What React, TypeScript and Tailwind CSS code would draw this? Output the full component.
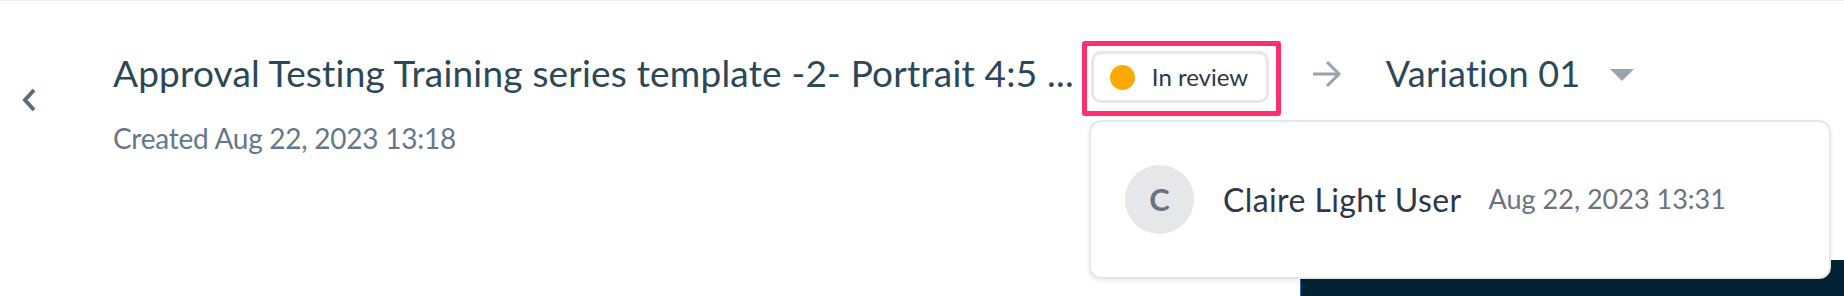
import React from 'react';

const font = { fontFamily: 'Lato, "Open Sans", sans-serif' };

function ChevronLeft() {
  return (
    <svg width="16" height="24" viewBox="0 0 16 24" fill="none">
      <path d="M13 2 L4 12 L13 22" stroke="#5f6b7a" strokeWidth="4" strokeLinecap="butt" strokeLinejoin="miter" />
    </svg>
  );
}

function ArrowRight() {
  return (
    <svg width="30" height="28" viewBox="0 0 30 28" fill="none">
      <path d="M1 14 H27 M15 2 L27 14 L15 26" stroke="#9aa3ad" strokeWidth="3" />
    </svg>
  );
}

function Caret() {
  return (
    <svg width="24" height="12" viewBox="0 0 24 12">
      <path d="M0 0 H24 L12 12 Z" fill="#9aa3ad" />
    </svg>
  );
}

export default function App() {
  return (
    <div className="relative w-full h-[296px] bg-white overflow-hidden border-t border-[#f1f1f1]" style={font}>
      <div className="flex items-start h-[259px]">
        <div className="ml-[21px] mt-[87px] w-[16px]">
          <ChevronLeft />
        </div>

        <div className="ml-[76px] mt-[50px] flex flex-col">
          <h1 className="text-[37px] leading-[44px] text-[#2c4858] whitespace-nowrap tracking-[0.2px]">
            Approval Testing Training series template -2- Portrait 4:5 ...
          </h1>
          <p className="mt-[25px] text-[28px] leading-[36px] text-[#66778a] whitespace-nowrap tracking-[-0.25px]">
            Created Aug 22, 2023 13:18
          </p>
        </div>

        <div className="ml-[8px] mt-[40px] border-[5px] border-[#ff2e6e] rounded-[3px] pl-[4px] pt-[5px] pr-[7px] pb-[8px]">
          <div className="flex items-center h-[52px] w-[178px] border-[3px] border-[#e5e7eb] rounded-[10px] pl-[16px]">
            <span className="w-[25px] h-[25px] rounded-full bg-[#ffa800]" />
            <span className="ml-[17px] text-[24px] text-[#2d3748] whitespace-nowrap">In review</span>
          </div>
        </div>

        <div className="ml-[31px] mt-[59px]">
          <ArrowRight />
        </div>

        <div className="ml-[44px] mt-[50px] text-[36px] leading-[44px] text-[#2c4858] whitespace-nowrap tracking-[0.2px]">
          Variation 01
        </div>

        <div className="ml-[30px] mt-[68px]">
          <Caret />
        </div>
      </div>

      <div className="ml-[1300px] h-[37px] bg-[#032234] border-l border-[#1d6fa5]" />

      <div className="absolute left-[1089px] top-[119px] w-[742px] h-[159px] bg-white border-2 border-[#e5e7eb] rounded-[12px] shadow-[0_2px_4px_rgba(0,0,0,0.08)] flex items-center pl-[34px]">
        <div className="w-[69px] h-[69px] rounded-full bg-[#e5e7eb] flex items-center justify-center text-[31px] font-bold text-[#6b7280]">
          C
        </div>
        <span className="ml-[29px] text-[32px] text-[#2d3748] whitespace-nowrap tracking-[0.4px]">Claire Light User</span>
        <span className="ml-[27px] text-[27px] text-[#6b7280] whitespace-nowrap">Aug 22, 2023 13:31</span>
      </div>
    </div>
  );
}
